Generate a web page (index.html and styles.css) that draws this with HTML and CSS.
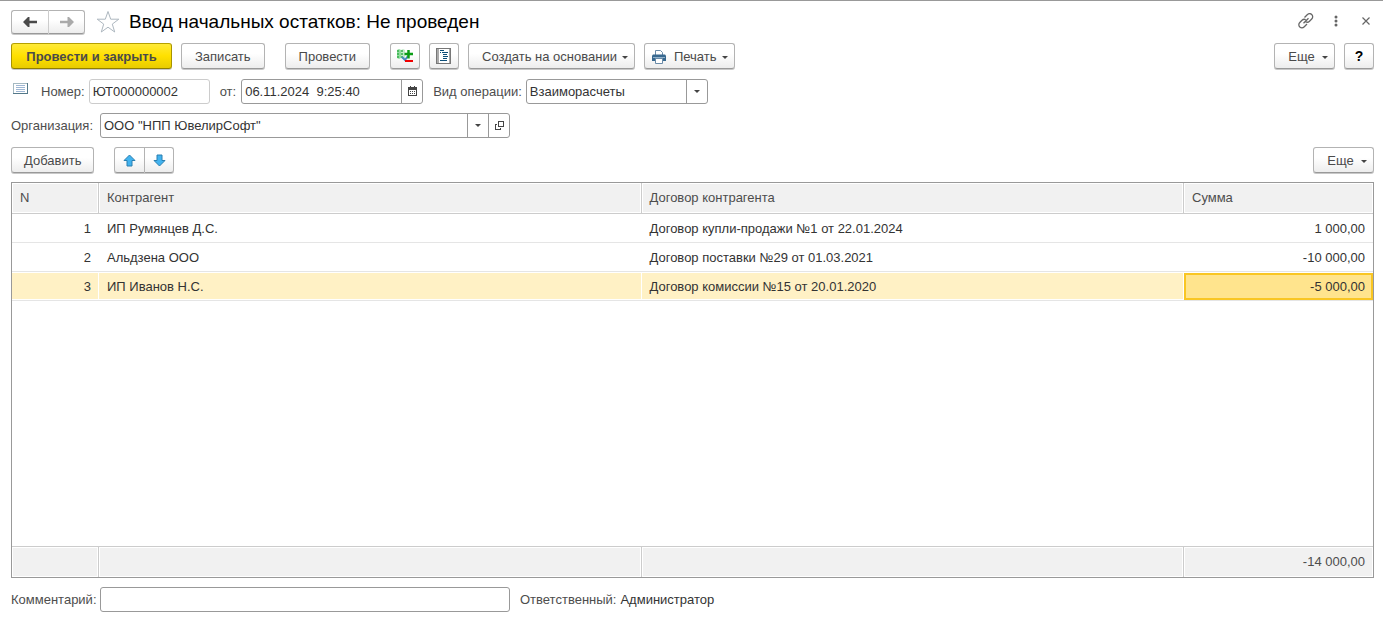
FILE: index.html
```html
<!DOCTYPE html>
<html lang="ru">
<head>
<meta charset="utf-8">
<title>Ввод начальных остатков: Не проведен</title>
<link rel="stylesheet" href="styles.css">
</head>
<body>
<main class="form">
  <header class="titlebar">
    <div class="pair nav">
      <button class="btn" type="button" aria-label="Назад"><svg width="16" height="12" viewBox="0 0 16 12"><path d="M1 6l5-5h1.500v3.700h7.500v2.600H7.500V11H6z" fill="#4a4a4a"/></svg></button>
      <button class="btn" type="button" aria-label="Вперед"><svg width="16" height="12" viewBox="0 0 16 12"><path d="M15 6l-5-5H8.500v3.700H1v2.600h7.500V11H10z" fill="#aaa"/></svg></button>
    </div>
    <button class="ghost star" type="button" aria-label="В избранное"><svg width="24" height="24" viewBox="0 0 24 24"><path d="M12 1.500l2.700 7.700h8.100l-6.500 4.900 2.400 7.900-6.700-4.800-6.700 4.800 2.400-7.900-6.500-4.900h8.100z" fill="#fff" stroke="#adb7bf"/></svg></button>
    <h1>Ввод начальных остатков: Не проведен</h1>
    <div class="window-tools">
      <button class="ghost" type="button" aria-label="Ссылка"><svg width="18" height="18" viewBox="-1 1 18 18" fill="none" stroke="#666" stroke-width="1.300"><path d="M7.500 5.500l2.700-2.700c1.300-1.300 3.200-1.400 4.500-.3 1.300 1.200 1.300 3.200 0 4.500l-2.200 2.200c-1.100 1.100-2.600 1.300-3.700.6M10 12l-2.700 2.700c-1.300 1.300-3.200 1.400-4.500.3-1.300-1.200-1.300-3.200 0-4.500L5 8.300c1.100-1.100 2.600-1.300 3.700-.6M6.500 11.300l5-5"/></svg></button>
      <button class="ghost" type="button" aria-label="Меню"><svg width="18" height="18" viewBox="-1 0 18 18" fill="#666"><circle cx="9" cy="4" r="1.500"/><circle cx="9" cy="8" r="1.500"/><circle cx="9" cy="12" r="1.500"/></svg></button>
      <button class="ghost" type="button" aria-label="Закрыть"><svg width="18" height="18" viewBox="-1 1 18 18" stroke="#666" stroke-width="1.200"><path d="M5.500 5.500l7 7m0-7l-7 7"/></svg></button>
    </div>
  </header>

  <div class="toolbar">
    <button class="btn primary" type="button">Провести и закрыть</button>
    <button class="btn text" type="button">Записать</button>
    <button class="btn text apart" type="button">Провести</button>
    <button class="btn square apart" type="button" aria-label="Движения документа">
      <svg width="18" height="18" viewBox="0 0 18 18"><path d="M1 3l2-1 2 1v8l-2 1-2-1z" fill="#8fdc9c"/><path d="M5 3l2-1 2 1v8l-2 1-2-1z" fill="#c3ebc9"/><path d="M2 3v9M6 3v9" stroke="#35b04a" stroke-width="1.500" stroke-dasharray="2 1"/><path d="M6 10l3 3 3-4" fill="none" stroke="#4789bd" stroke-width="2"/><path d="M12.500 3v8.500M8.500 7h8.500" stroke="#0b9d16" stroke-width="2.500"/><path d="M9 14h8" stroke="#f00000" stroke-width="2"/></svg>
    </button>
    <button class="btn square" type="button" aria-label="Журнал">
      <svg width="18" height="18" viewBox="0 0 18 18" shape-rendering="crispEdges"><path d="M1.500 1.500h14v15h-14z" fill="#fff" stroke="#777"/><path d="M2 2h2v14H2z" fill="#aaa"/><path d="M14.500 2v14" stroke="#aaa"/><path d="M5 3.500h4M7 5.500h6M8 7.500h4M8 9.500h5M8 11.500h4M5 13.500h7M5 5.500h1" stroke="#0d4e78"/></svg>
    </button>
    <button class="btn text menu" type="button">Создать на основании<i class="caret"></i></button>
    <button class="btn print menu" type="button"><svg width="16" height="16" viewBox="0 0 16 16"><path d="M4.500 6V1.500h5l2 2V6" fill="#fff" stroke="#6a8ba8"/><path d="M2 5.500h12l1 1V12H1V6.500z" fill="#386990"/><path d="M2 8.500h12" stroke="#91b2cc"/><path d="M4.500 9.500h7v5h-7z" fill="#fff" stroke="#6a8ba8"/></svg>Печать<i class="caret"></i></button>
    <button class="btn more menu end" type="button">Еще<i class="caret"></i></button>
    <button class="btn square help" type="button">?</button>
  </div>

  <div class="fields">
    <svg class="doc" width="16" height="12" viewBox="0 0 16 12" shape-rendering="crispEdges"><path d="M.5.5h14v10H.5z" fill="#fff" stroke="#a5b9c2"/><path d="M0 10.500h15M14.500 0v11" stroke="#54798a"/><path d="M3 2.500h9M3 4.500h9M3 6.500h9M3 8.500h9" stroke="#9fb7d4"/></svg>
    <label for="number">Номер:</label>
    <input class="box number" id="number" value="ЮТ000000002" readonly>
    <label class="from" for="date">от:</label>
    <div class="box combo date">
      <input id="date" value="06.11.2024  9:25:40">
      <button type="button" aria-label="Календарь"><svg width="11" height="11" viewBox="0 0 11 11" shape-rendering="crispEdges"><path d="M1.500 1.500h8v8h-8z" fill="#fff" stroke="#444"/><path d="M1 1h9v3H1zM3 0h1v2H3zM7 0h1v2H7z" fill="#444"/><path d="M3 5.500h5M3 7.500h5" stroke="#444" stroke-dasharray="1 1"/></svg></button>
    </div>
    <label class="kind-label" for="kind">Вид операции:</label>
    <div class="box combo kind">
      <select id="kind"><option>Взаиморасчеты</option></select>
      <span class="arrow"><i class="caret"></i></span>
    </div>
  </div>

  <div class="fields org-row">
    <label class="lead" for="org">Организация:</label>
    <div class="box combo org">
      <select id="org"><option>ООО "НПП ЮвелирСофт"</option></select>
      <span class="arrow"><i class="caret"></i></span>
      <button type="button" aria-label="Открыть"><svg width="11" height="11" viewBox="0 0 11 11" fill="none" stroke="#444" shape-rendering="crispEdges"><path d="M4.500 1.500h5v5h-5zM3 4.500H1.500v5h5V8"/></svg></button>
    </div>
  </div>

  <div class="toolbar commands">
    <button class="btn add" type="button">Добавить</button>
    <div class="pair move apart">
      <button class="btn" type="button" aria-label="Вверх"><svg width="13" height="13" viewBox="0 0 13 13"><path d="M6.500 1L12 6.500H9V12H4V6.500H1z" fill="#42b3ef" stroke="#2b7fb0"/></svg></button>
      <button class="btn" type="button" aria-label="Вниз"><svg width="13" height="13" viewBox="0 0 13 13"><path d="M6.500 12L12 6.500H9V1H4v5.500H1z" fill="#42b3ef" stroke="#2b7fb0"/></svg></button>
    </div>
    <button class="btn more menu end" type="button">Еще<i class="caret"></i></button>
  </div>

  <div class="grid">
    <table>
      <colgroup><col class="c-num"><col><col><col class="c-sum"></colgroup>
      <thead><tr><th>N</th><th>Контрагент</th><th>Договор контрагента</th><th>Сумма</th></tr></thead>
      <tbody>
        <tr><td class="r">1</td><td>ИП Румянцев Д.С.</td><td>Договор купли-продажи №1 от 22.01.2024</td><td class="r">1 000,00</td></tr>
        <tr><td class="r">2</td><td>Альдзена ООО</td><td>Договор поставки №29 от 01.03.2021</td><td class="r">-10 000,00</td></tr>
        <tr class="current"><td class="r">3</td><td>ИП Иванов Н.С.</td><td>Договор комиссии №15 от 20.01.2020</td><td class="r active">-5 000,00</td></tr>
        <tr class="filler"><td colspan="4"></td></tr>
      </tbody>
      <tfoot><tr><td></td><td></td><td></td><td class="r">-14 000,00</td></tr></tfoot>
    </table>
  </div>

  <footer class="fields">
    <label class="lead" for="comment">Комментарий:</label>
    <input class="box comment" id="comment">
    <span class="resp">Ответственный:</span>
    <span class="user">Администратор</span>
  </footer>
</main>
</body>
</html>
```
FILE: styles.css
```css
* { box-sizing: border-box; }
body { margin: 0; background: #fff; }
body, button, input, select {
  font: 13px/16px "Liberation Sans", Arial, sans-serif;
  color: #333;
}
button, select { padding: 0; margin: 0; }
svg { display: block; flex: none; }

.form {
  display: flex;
  flex-direction: column;
  height: 100vh;
  padding: 8px 9px 5px 11px;
  border-top: 1px solid #999;
}

.titlebar { display: flex; align-items: center; height: 25px; }
h1 { margin: 0 0 0 9px; font-size: 19px; line-height: 24px; font-weight: 400; color: #000; }
.ghost { display: flex; border: 0; background: none; }
.star { margin-left: 11px; }
.window-tools { display: flex; gap: 12px; margin-left: auto; }

.btn {
  display: flex;
  align-items: center;
  justify-content: center;
  height: 26px;
  border: 1px solid #b3b3b3;
  border-bottom-color: #999;
  border-radius: 3px;
  background: linear-gradient(#fff 40%, #ededed);
  box-shadow: 0 1px 0 #c8c8c8;
  color: #4a4a4a;
  white-space: nowrap;
}
.pair { display: flex; }
.pair .btn:first-child { border-radius: 3px 0 0 3px; }
.pair .btn:last-child { border-left: 0; border-radius: 0 3px 3px 0; }
.nav .btn { height: 24px; }
.nav .btn:first-child { width: 38px; border-right-color: #ccc; }
.nav .btn:last-child { width: 36px; }
.move .btn:first-child { width: 31px; }
.move .btn:last-child { width: 29px; }

.toolbar { display: flex; gap: 9px; margin-top: 9px; }
.text, .more, .add, .primary { padding: 2px 13px 0; }
.primary {
  min-width: 161px;
  border-color: #b5a000 #a89400 #8f7e00;
  background: linear-gradient(#ffea38, #ffe000 50%, #e8cc00);
  font-weight: 700;
}
.add { padding: 2px 12px 0; }
.apart { margin-left: 11px; }
.square { width: 30px; }
.menu { padding-right: 6px; }
.more { min-width: 61px; }
.print { padding: 2px 6px 0; }
.print svg { margin-right: 7px; }
.end { margin-left: auto; }
.help { color: #000; font-weight: 700; font-size: 14px; }

.caret {
  border: 3px solid transparent;
  border-top-color: #444;
  border-bottom: 0;
}
.menu .caret { margin-left: 5px; }
.more .caret { margin-left: 7px; }

.fields { display: flex; align-items: center; height: 25px; margin-top: 9px; color: #4d4d4d; }
.titlebar + .toolbar + .fields { margin-top: 10px; }
.doc { align-self: flex-start; margin: 4px 12px 0 2px; }
.box {
  height: 25px;
  border: 1px solid #999;
  border-radius: 3px;
  background: #fff;
}
input.box { padding: 0 3px; }
.number { width: 121px; margin-left: 4px; }
input.number { border-color: #ccc; }
.from { margin-left: 10px; }
.combo { display: flex; }
.combo input, .combo select {
  flex: 1;
  min-width: 0;
  padding: 0 3px;
  border: 0;
  background: none;
  appearance: none;
  white-space: pre;
}
.combo button, .arrow {
  display: flex;
  align-items: center;
  justify-content: center;
  width: 21px;
  border: 0;
  border-left: 1px solid #999;
  background: none;
}
.date { width: 182px; margin-left: 5px; }
.kind-label { margin-left: 10px; }
.kind { width: 182px; margin-left: 4px; }
.lead { width: 89px; white-space: nowrap; }
.org, .comment { width: 410px; }
.resp { margin-left: 10px; }
.user { margin-left: 4px; color: #333; }

.commands { margin-bottom: 9px; }

.grid { flex: 1; min-height: 0; border: 1px solid #999; }
table {
  width: 100%;
  height: 100%;
  table-layout: fixed;
  border-collapse: separate;
  border-spacing: 0;
}
.c-num { width: 87px; }
.c-sum { width: 189px; }
tr { height: 29px; }
th, td { padding: 0 8px; text-align: left; font-weight: 400; }
thead tr, tfoot tr { height: 31px; }
th, tfoot td {
  border-right: 1px solid #ccc;
  background: #f1f1f1;
  box-shadow: inset 0 0 0 1px #fff;
  color: #4d4d4d;
}
th { border-bottom: 1px solid #ccc; }
tfoot td { border-top: 1px solid #ccc; }
th:last-child, tfoot td:last-child { border-right: 0; }
tbody td { padding-top: 2px; border-bottom: 1px solid #e5e5e5; }
tbody .filler { height: auto; }
.filler td { border: 0; }
.r { text-align: right; }
.current td {
  background: #fff1c5;
  box-shadow: inset 0 1px 0 #fff, inset -1px -1px 0 #fff;
}
.current .active {
  background: #ffe48d;
  box-shadow: inset 0 1px 0 #fff, inset 0 0 0 2px #f9c623, inset 0 3px 0 #f9c623;
}
```
